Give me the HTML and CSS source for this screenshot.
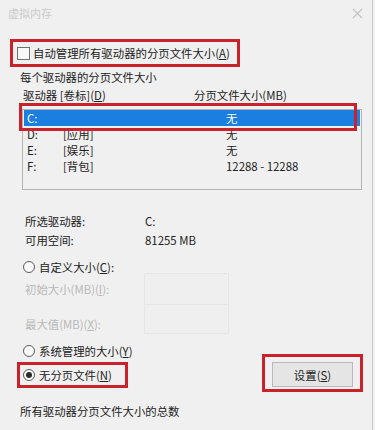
FILE: index.html
```html
<!DOCTYPE html>
<html lang="zh-CN">
<head>
<meta charset="utf-8">
<title>虚拟内存</title>
<link rel="stylesheet" href="styles.css">
</head>
<body>
<div class="dialog">
  <div class="titlebar">
    <span class="title">虚拟内存</span>
    <svg class="close" width="11" height="11" viewBox="0 0 11 11"><path d="M1 1 L10 10 M10 1 L1 10" stroke="#c2c2c2" stroke-width="1.1" fill="none"/></svg>
  </div>

  <div class="mark mark-auto">
    <span class="checkbox"></span>
    <span class="label">自动管理所有驱动器的分页文件大小(<u>A</u>)</span>
  </div>

  <div class="group-title">每个驱动器的分页文件大小</div>

  <div class="list-head">
    <span class="col-drive">驱动器 [卷标](<u>D</u>)</span>
    <span class="col-size">分页文件大小(MB)</span>
  </div>

  <div class="list-wrap">
    <div class="listbox">
      <div class="row selected"><span class="c-letter">C:</span><span class="c-label"></span><span class="c-size">无</span></div>
      <div class="row"><span class="c-letter">D:</span><span class="c-label">[应用]</span><span class="c-size">无</span></div>
      <div class="row"><span class="c-letter">E:</span><span class="c-label">[娱乐]</span><span class="c-size">无</span></div>
      <div class="row"><span class="c-letter">F:</span><span class="c-label">[背包]</span><span class="c-size">12288 - 12288</span></div>
    </div>
    <div class="mark mark-row"></div>
  </div>

  <div class="info">
    <div class="info-row"><span class="info-key">所选驱动器:</span><span>C:</span></div>
    <div class="info-row"><span class="info-key">可用空间:</span><span>81255 MB</span></div>
  </div>

  <div class="radio-row custom"><span class="radio"></span><span>自定义大小(<u>C</u>):</span></div>

  <div class="size-grid">
    <span class="dis-label first">初始大小(MB)(<u>I</u>):</span>
    <span class="input"></span>
    <span class="dis-label second">最大值(MB)(<u>X</u>):</span>
    <span class="input"></span>
  </div>

  <div class="lower">
    <div class="lower-left">
      <div class="radio-row"><span class="radio"></span><span>系统管理的大小(<u>Y</u>)</span></div>
      <div class="mark mark-none">
        <span class="radio checked"></span><span>无分页文件(<u>N</u>)</span>
      </div>
    </div>
    <div class="mark mark-set">
      <button class="btn" type="button">设置(<u>S</u>)</button>
    </div>
  </div>

  <div class="total">所有驱动器分页文件大小的总数</div>
</div>
</body>
</html>
```

FILE: styles.css
```css
html, body {
  margin: 0;
  padding: 0;
  background: #f3f3f3;
}

.dialog {
  width: 373px;
  height: 430px;
  box-sizing: border-box;
  border-right: 1px solid #c9c9c9;
  background: #f0f0f0;
  font-family: "Microsoft YaHei", "Noto Sans CJK SC", sans-serif;
  font-size: 11.4px;
  color: #222222;
  overflow: hidden;
}

u { text-decoration: underline; text-underline-offset: 1px; }

.titlebar {
  height: 26px;
  display: flex;
  align-items: center;
  justify-content: space-between;
  padding: 0 9px 0 8px;
}
.title {
  color: #cacaca;
  font-size: 11px;
}
.close { display: block; margin-right: 0; }

.mark {
  border: 3px solid #c8232c;
  box-sizing: border-box;
}

.mark-auto {
  margin: 13px 0 0 10px;
  width: 230px;
  height: 28px;
  display: flex;
  align-items: center;
  padding-left: 4px;
}
.checkbox {
  width: 13px;
  height: 13px;
  box-sizing: border-box;
  border: 1px solid #707070;
  background: #f7f7f7;
  margin-right: 3px;
  flex: none;
}
.label { white-space: nowrap; line-height: 16px; }

.group-title {
  margin-top: 2px;
  padding-left: 20px;
  line-height: 16px;
}

.list-head {
  margin-top: 2px;
  padding-left: 23px;
  line-height: 16px;
  display: flex;
}
.col-drive { width: 171px; }

.list-wrap {
  position: relative;
  margin: 6px 0 0 22px;
  width: 340px;
}
.listbox {
  height: 81px;
  box-sizing: border-box;
  border: 1px solid #b4b4b4;
  padding: 0 1px;
  background: #f0f0f0;
}
.row {
  height: 16px;
  line-height: 16px;
  display: flex;
  padding-left: 3px;
}
.row.selected {
  background: #1a7fdf;
  color: #ffffff;
}
.c-letter { width: 36px; }
.c-label { width: 163px; }
.mark-row {
  position: absolute;
  left: -3px;
  top: -6px;
  width: 338px;
  height: 28px;
}

.info {
  margin-top: 22px;
  padding-left: 25px;
}
.info-row {
  display: flex;
  line-height: 19px;
}
.info-key { width: 120px; }

.radio-row {
  display: flex;
  align-items: center;
  line-height: 16px;
  padding-left: 23px;
}
.custom { margin-top: 9px; }
.radio {
  width: 12px;
  height: 12px;
  box-sizing: border-box;
  border: 1px solid #5a5a5a;
  border-radius: 50%;
  background: #fbfbfb;
  margin-right: 4px;
  flex: none;
  display: flex;
  align-items: center;
  justify-content: center;
}
.radio.checked::after {
  content: "";
  width: 6px;
  height: 6px;
  border-radius: 50%;
  background: #2b2b2b;
}

.size-grid {
  margin-top: -2px;
  padding-left: 25px;
  display: grid;
  grid-template-columns: 119px 85px;
  grid-template-rows: 32px 29px;
}
.dis-label {
  color: #b8b8b8;
  line-height: 16px;
}
.dis-label.first { padding-top: 8px; }
.dis-label.second { padding-top: 11px; }
.input {
  border: 1px solid #e6e6e6;
  background: #efefef;
}
.input + .dis-label + .input { border-top: none; }

.lower {
  margin-top: 9px;
  display: flex;
}
.lower-left {
  display: flex;
  flex-direction: column;
}
.mark-none {
  margin: 3px 0 0 17px;
  width: 111px;
  height: 26px;
  display: flex;
  align-items: center;
  padding-left: 3px;
  line-height: 16px;
}
.mark-set {
  margin: 11px 0 0 auto;
  margin-right: 9px;
  width: 101px;
  height: 38px;
  padding: 5px 0 0 7px;
}
.btn {
  display: block;
  width: 81px;
  height: 25px;
  margin: 0;
  padding: 0;
  border: 1px solid #b9b9b9;
  background: #e5e5e5;
  font-family: inherit;
  font-size: 11.4px;
  color: #222222;
}

.total {
  margin-top: 11px;
  padding-left: 20px;
  line-height: 16px;
}
```
